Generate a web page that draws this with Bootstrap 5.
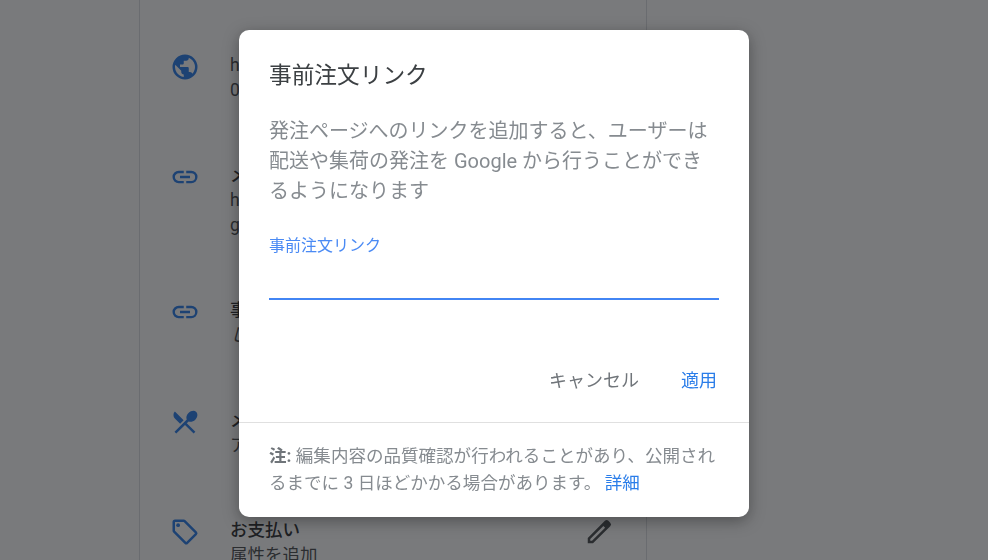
<!DOCTYPE html>
<html lang="ja"><head><meta charset="utf-8">
<link rel="stylesheet" href="https://cdn.jsdelivr.net/npm/bootstrap@5.3.0/dist/css/bootstrap.min.css">
<style>
html,body{height:560px;overflow:hidden;background:#fff;font-family:Roboto,"Noto Sans CJK JP",sans-serif;}
.sheet{width:508px;margin-left:139px;height:560px;border-left:1px solid #dadce0;border-right:1px solid #dadce0;background:#fff;overflow:hidden;}
.info-row{height:110px;padding-left:30px;display:flex;gap:30px;font-size:17.5px;line-height:25px;color:#3c4043;}
.info-row svg{flex:none;width:30px;height:30px;margin-top:-1px;fill:#1a73e8;}
.first-row{padding-top:53px;height:163px;}
.tall-row{height:135px;}
.info-row b{font-weight:500;color:#202124;display:block;}
.row-tail{flex:1;display:flex;justify-content:flex-end;padding-right:32px;}
.row-tail svg{fill:#3c4043;}
.scrim{position:fixed;inset:0;background:rgba(32,33,36,.6);}
.dlg{position:fixed;left:239px;top:30px;width:510px;height:487px;background:#fff;border-radius:10px;box-shadow:0 4px 16px rgba(0,0,0,.35);display:flex;flex-direction:column;}
.dlg-head{padding:29px 30px 0;font-size:22.7px;line-height:34px;color:#3c4043;}
.dlg-text{padding:23px 30px 0;font-size:20px;line-height:30px;color:#868b90;}
.dlg-field{margin:28px 30px 0;height:66px;border-bottom:2px solid #4285f4;font-size:16px;line-height:24px;color:#4a8af4;}
.dlg-actions{display:flex;justify-content:flex-end;gap:42px;padding:0 32px 0 0;margin-top:66px;font-size:18px;line-height:30px;color:#70757a;}
.blue-text{color:#2a7de9;text-decoration:none;}
.dlg-foot{margin-top:26px;border-top:1px solid #e0e0e0;padding:20px 30px 0;font-size:17.55px;line-height:27px;color:#868b90;}
.dlg-foot b{font-weight:700;color:#70757a;}
.foot-link{margin-left:-1px;}
</style></head><body>
<main class="sheet">
<section class="info-row first-row"><svg viewBox="0 0 24 24"><path d="M12 2a10 10 0 1 0 0 20 10 10 0 0 0 0-20zM11 19.900A8 8 0 0 1 4.200 10.200L9 15v1c0 1.100.9 2 2 2zm6.900-2.500c-.3-.8-1-1.400-1.900-1.400h-1v-3c0-.6-.4-1-1-1H8v-2h2c.6 0 1-.4 1-1V7h2c1.100 0 2-.9 2-2v-.4a8 8 0 0 1 2.900 12.800z"/></svg><div>h<br>0</div></section>
<section class="info-row tall-row"><svg viewBox="0 0 24 24"><path d="M3.900 12c0-1.700 1.400-3.100 3.100-3.100h4V7H7a5 5 0 0 0 0 10h4v-1.900H7c-1.700 0-3.100-1.400-3.100-3.100zM8 13h8v-2H8v2zm9-6h-4v1.900h4a3.100 3.100 0 0 1 0 6.200h-4V17h4a5 5 0 0 0 0-10z"/></svg><div><b>メ</b>h<br>g</div></section>
<section class="info-row"><svg viewBox="0 0 24 24"><path d="M3.900 12c0-1.700 1.400-3.100 3.100-3.100h4V7H7a5 5 0 0 0 0 10h4v-1.900H7c-1.700 0-3.100-1.400-3.100-3.100zM8 13h8v-2H8v2zm9-6h-4v1.900h4a3.100 3.100 0 0 1 0 6.200h-4V17h4a5 5 0 0 0 0-10z"/></svg><div><b>事</b><i>し</i></div></section>
<section class="info-row"><svg viewBox="0 0 24 24"><path d="M8.100 13.300l2.800-2.800L3.900 3.500a4 4 0 0 0 0 5.600l4.200 4.200zm6.800-1.800c1.500.7 3.700.2 5.300-1.400 1.900-1.900 2.300-4.700.8-6.200-1.500-1.500-4.200-1.100-6.200.8-1.600 1.600-2.100 3.800-1.400 5.300L3.600 19.800 5 21.200l7-6.900 6.900 6.900 1.400-1.400-6.900-6.900 1.500-1.400z"/></svg><div><b>メ</b>ア</div></section>
<section class="info-row"><svg viewBox="0 0 24 24"><path d="M21.400 11.600l-9-9A2 2 0 0 0 11 2H4a2 2 0 0 0-2 2v7c0 .6.200 1.100.6 1.400l9 9a2 2 0 0 0 2.800 0l7-7a2 2 0 0 0 0-2.800zM13 20l-9-9V4h7l9 9-7 7z"/><circle cx="6.500" cy="6.500" r="1.500"/></svg><div><b>お支払い</b>属性を追加</div><div class="row-tail"><svg viewBox="0 0 24 24"><path d="M3 21v-4.200L16.700 3a2 2 0 0 1 2.800 0l1.500 1.500a2 2 0 0 1 0 2.800L7.200 21H3zm2-2h1.400L16.900 8.500l-1.400-1.400L5 17.600V19z"/></svg></div></section>
</main>
<div class="scrim"></div>
<div class="dlg" role="dialog">
<div class="dlg-head">事前注文リンク</div>
<div class="dlg-text">発注ページへのリンクを追加すると、ユーザーは配送や集荷の発注を Google から行うことができるようになります</div>
<div class="dlg-field">事前注文リンク</div>
<div class="dlg-actions"><span>キャンセル</span><span class="blue-text">適用</span></div>
<div class="dlg-foot"><b>注:</b> 編集内容の品質確認が行われることがあり、公開されるまでに 3 日ほどかかる場合があります。 <a class="blue-text foot-link" href="#">詳細</a></div>
</div>
<script src="https://cdn.jsdelivr.net/npm/bootstrap@5.3.0/dist/js/bootstrap.bundle.min.js"></script>
</body></html>
